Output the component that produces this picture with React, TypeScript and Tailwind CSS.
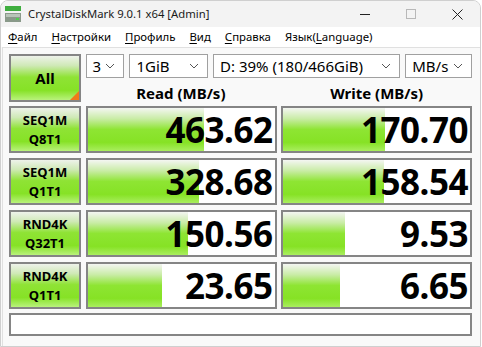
import React from "react";

const font = { fontFamily: '"Noto Sans", "Open Sans", sans-serif' };

const rows = [
  { a: "SEQ1M", b: "Q8T1", read: "463.62", rw: 116, write: "170.70", ww: 102 },
  { a: "SEQ1M", b: "Q1T1", read: "328.68", rw: 111, write: "158.54", ww: 101 },
  { a: "RND4K", b: "Q32T1", read: "150.56", rw: 100, write: "9.53", ww: 62 },
  { a: "RND4K", b: "Q1T1", read: "23.65", rw: 74, write: "6.65", ww: 57 },
];

const greenBtn =
  "bg-[linear-gradient(to_bottom,#eef2ea_0%,#cfe9b6_22%,#8fe335_48%,#86e226_78%,#b9f27c_100%)]";
const greenBar =
  "bg-[linear-gradient(to_bottom,#f4f6f2_0%,#c9eca6_25%,#8ee533_50%,#86e225_80%,#a9ee5e_100%)]";

function Chevron() {
  return (
    <svg width="10" height="6" viewBox="0 0 10 6" fill="none" stroke="#555" strokeWidth="1">
      <path d="M1 1l4 4 4-4" />
    </svg>
  );
}

function Combo({ w, text }: { w: string; text: string }) {
  return (
    <div className={`${w} flex h-[24px] items-center justify-between border border-[#a0a0a0] bg-white pl-[6px] pr-[8px] text-[15px] text-black`}>
      <span className="leading-none">{text}</span>
      <Chevron />
    </div>
  );
}

function Cell({ value, bar }: { value: string; bar: number }) {
  return (
    <div className="relative h-[47px] border-2 border-[#858585] bg-white">
      <div className={`absolute inset-y-0 left-0 ${greenBar}`} style={{ width: bar }} />
      <div className="relative flex h-full items-center justify-end pr-[2px] text-[35px] font-bold leading-none tracking-[-0.5px] text-black">
        {value}
      </div>
    </div>
  );
}

function U({ c }: { c: string }) {
  return <span className="underline underline-offset-2">{c}</span>;
}

export default function App() {
  return (
    <div className="h-[347px] w-[482px] overflow-hidden bg-white" style={font}>
      <div className="h-[347px] w-[481px] overflow-hidden rounded-t-[8px] border border-[#cfcfcf] bg-[#f9f9f9]">
        {/* Title bar */}
        <div className="flex h-[26px] items-center bg-[#f3f3f3]">
          <svg className="ml-[4px]" width="16" height="16" viewBox="0 0 16 16">
            <rect x="0" y="0" width="16" height="5" fill="#3fae3f" />
            <rect x="0" y="7" width="16" height="9" fill="#8a9a8a" />
            <rect x="1" y="8" width="14" height="3" fill="#b8c4b8" />
            <rect x="11" y="12" width="3" height="2" fill="#4fd04f" />
          </svg>
          <span className="ml-[7px] text-[11.3px] text-[#1a1a1a]">CrystalDiskMark 9.0.1 x64 [Admin]</span>
          <div className="ml-auto flex h-full items-center">
            <div className="flex w-[46px] justify-center">
              <div className="h-px w-[10px] bg-[#222]" />
            </div>
            <div className="flex w-[46px] justify-center">
              <div className="h-[10px] w-[10px] border border-[#b8b8b8]" />
            </div>
            <div className="flex w-[46px] justify-center">
              <svg width="11" height="11" viewBox="0 0 11 11" stroke="#222" strokeWidth="1">
                <path d="M0.5 0.5l10 10M10.5 0.5l-10 10" />
              </svg>
            </div>
          </div>
        </div>

        {/* Menu bar */}
        <div className="flex h-[20px] items-center gap-[14px] bg-white pl-[7px] text-[11.4px] text-black">
          <span><U c="Ф" />айл</span>
          <span><U c="Н" />астройки</span>
          <span><U c="П" />рофиль</span>
          <span><U c="В" />ид</span>
          <span><U c="С" />правка</span>
          <span>Язык(<U c="L" />anguage)</span>
        </div>

        {/* Content */}
        <div className="ml-[1px] h-full border-l border-t border-[#e0e0e0] bg-[#f9f9f9] pl-[6px] pt-[6px]">
          <div className="grid grid-cols-[72px_191px_191px] gap-x-[4.5px]">
            <div className={`relative flex h-[48px] items-center justify-center border-2 border-[#858585] ${greenBtn} text-[15px] font-bold text-black`}>
              All
              <div className="absolute bottom-0 right-0 h-0 w-0 border-b-[9px] border-l-[9px] border-b-[#f07a1a] border-l-transparent" />
            </div>
            <div className="col-span-2 flex h-[48px] flex-col">
              <div className="flex gap-[5px]">
                <Combo w="w-[39px]" text="3" />
                <Combo w="w-[79px]" text="1GiB" />
                <Combo w="w-[188px]" text="D: 39% (180/466GiB)" />
                <Combo w="w-[67px]" text="MB/s" />
              </div>
              <div className="grid h-[24px] grid-cols-2 gap-x-[5px]">
                <div className="flex items-center justify-center pt-[7px] text-[15px] font-bold leading-none text-black">Read (MB/s)</div>
                <div className="flex items-center justify-center pt-[7px] text-[15px] font-bold leading-none text-black">Write (MB/s)</div>
              </div>
            </div>
          </div>

          <div className="mt-[4px] flex flex-col gap-[5px]">
            {rows.map((r) => (
              <div key={r.a + r.b} className="grid grid-cols-[72px_191px_191px] gap-x-[4.5px]">
                <div className={`flex h-[47px] flex-col items-center justify-center border-2 border-[#858585] ${greenBtn} text-[13px] font-bold leading-[19px] text-black`}>
                  <span>{r.a}</span>
                  <span>{r.b}</span>
                </div>
                <Cell value={r.read} bar={r.rw} />
                <Cell value={r.write} bar={r.ww} />
              </div>
            ))}
          </div>

          <div className="mt-[4px] h-[23px] w-[463px] border-2 border-[#858585] bg-white" />
        </div>
      </div>
    </div>
  );
}
